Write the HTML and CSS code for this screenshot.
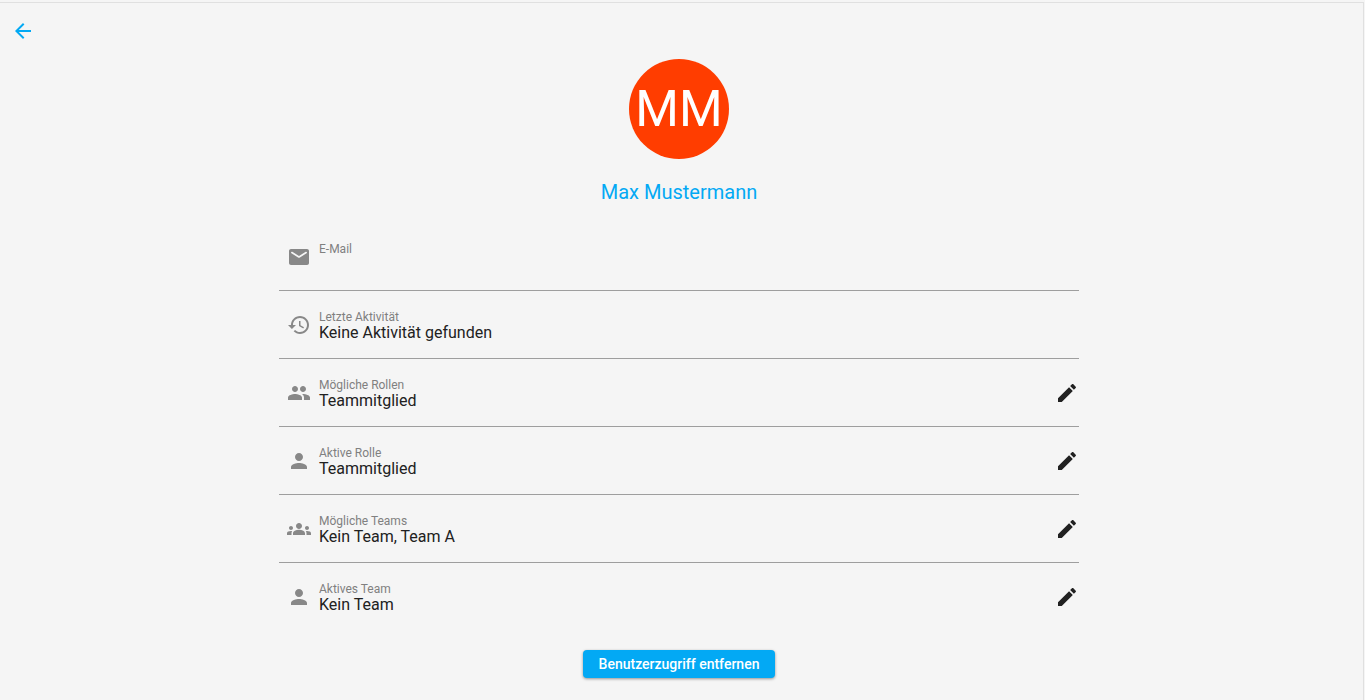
FILE: index.html
```html
<!DOCTYPE html>
<html lang="de">
<head>
<meta charset="utf-8">
<meta name="viewport" content="width=device-width, initial-scale=1">
<title>Max Mustermann</title>
<link rel="stylesheet" href="styles.css">
</head>
<body>
<svg class="sprite" aria-hidden="true">
  <symbol id="back" viewBox="0 0 24 24"><path d="M20 11H7.83l5.59-5.59L12 4l-8 8 8 8 1.41-1.41L7.83 13H20v-2z"/></symbol>
  <symbol id="mail" viewBox="0 0 24 24"><path d="M20 4H4c-1.100 0-2 .9-2 2v12c0 1.100.9 2 2 2h16c1.100 0 2-.9 2-2V6c0-1.100-.9-2-2-2zm-.4 4.250l-7.070 4.420c-.32.2-.74.2-1.060 0L4.400 8.250c-.25-.16-.4-.43-.4-.72 0-.67.73-1.070 1.300-.72L12 11l6.700-4.190c.57-.35 1.300.05 1.300.72 0 .29-.15.56-.4.72z"/></symbol>
  <symbol id="history" viewBox="0 0 24 24"><path d="M13 3c-4.970 0-9 4.030-9 9H1l3.890 3.890.07.14L9 12H6c0-3.870 3.130-7 7-7s7 3.130 7 7-3.130 7-7 7c-1.930 0-3.680-.79-4.940-2.060l-1.420 1.420C8.270 19.990 10.510 21 13 21c4.970 0 9-4.030 9-9s-4.030-9-9-9zm-1 5v5l4.280 2.540.72-1.210-3.500-2.080V8H12z"/></symbol>
  <symbol id="people" viewBox="0 0 24 24"><path d="M16 11c1.660 0 2.990-1.340 2.990-3S17.660 5 16 5s-3 1.340-3 3 1.340 3 3 3zm-8 0c1.660 0 2.990-1.340 2.990-3S9.660 5 8 5 5 6.340 5 8s1.340 3 3 3zm0 2c-2.330 0-7 1.170-7 3.500V19h14v-2.500c0-2.330-4.670-3.500-7-3.500zm8 0c-.29 0-.62.02-.97.05 1.160.84 1.970 1.970 1.970 3.450V19h6v-2.500c0-2.330-4.670-3.500-7-3.500z"/></symbol>
  <symbol id="person" viewBox="0 0 24 24"><path d="M12 12c2.210 0 4-1.790 4-4s-1.790-4-4-4-4 1.790-4 4 1.790 4 4 4zm0 2c-2.670 0-8 1.340-8 4v2h16v-2c0-2.660-5.330-4-8-4z"/></symbol>
  <symbol id="groups" viewBox="0 0 24 24"><path d="M12 12.750c1.630 0 3.070.39 4.240.9 1.080.48 1.760 1.560 1.760 2.730V18H6v-1.610c0-1.180.68-2.260 1.760-2.730 1.170-.52 2.610-.91 4.240-.91zM4 13c1.100 0 2-.9 2-2s-.9-2-2-2-2 .9-2 2 .9 2 2 2zm1.130 1.100c-.37-.06-.74-.1-1.130-.1-.99 0-1.930.21-2.780.58C.48 14.900 0 15.620 0 16.430V18h4.500v-1.610c0-.83.23-1.610.63-2.290zM20 13c1.100 0 2-.9 2-2s-.9-2-2-2-2 .9-2 2 .9 2 2 2zm4 3.430c0-.81-.48-1.530-1.220-1.850-.85-.37-1.790-.58-2.780-.58-.39 0-.76.04-1.130.1.4.68.63 1.460.63 2.290V18H24v-1.570zM12 6c1.660 0 3 1.340 3 3s-1.340 3-3 3-3-1.340-3-3 1.340-3 3-3z"/></symbol>
  <symbol id="edit" viewBox="0 0 24 24"><path d="M3 17.250V21h3.750L17.810 9.940l-3.750-3.750L3 17.250zM20.710 7.040c.39-.39.39-1.020 0-1.410l-2.340-2.340c-.39-.39-1.020-.39-1.410 0l-1.830 1.830 3.750 3.750 1.830-1.830z"/></symbol>
</svg>
<main class="page">
  <button class="icon-button back-button" type="button" aria-label="Zurück"><svg class="icon back-icon"><use href="#back"/></svg></button>
  <section class="profile">
    <div class="avatar">MM</div>
    <h1 class="name">Max Mustermann</h1>
    <ul class="details">
      <li class="row"><svg class="icon"><use href="#mail"/></svg><div class="entry"><span class="label">E-Mail</span><span class="value"></span></div></li>
      <li class="row"><svg class="icon"><use href="#history"/></svg><div class="entry"><span class="label">Letzte Aktivität</span><span class="value">Keine Aktivität gefunden</span></div></li>
      <li class="row"><svg class="icon"><use href="#people"/></svg><div class="entry"><span class="label">Mögliche Rollen</span><span class="value">Teammitglied</span></div><button class="icon-button" type="button" aria-label="Mögliche Rollen bearbeiten"><svg class="icon"><use href="#edit"/></svg></button></li>
      <li class="row"><svg class="icon"><use href="#person"/></svg><div class="entry"><span class="label">Aktive Rolle</span><span class="value">Teammitglied</span></div><button class="icon-button" type="button" aria-label="Aktive Rolle bearbeiten"><svg class="icon"><use href="#edit"/></svg></button></li>
      <li class="row"><svg class="icon"><use href="#groups"/></svg><div class="entry"><span class="label">Mögliche Teams</span><span class="value">Kein Team, Team A</span></div><button class="icon-button" type="button" aria-label="Mögliche Teams bearbeiten"><svg class="icon"><use href="#edit"/></svg></button></li>
      <li class="row"><svg class="icon"><use href="#person"/></svg><div class="entry"><span class="label">Aktives Team</span><span class="value">Kein Team</span></div><button class="icon-button" type="button" aria-label="Aktives Team bearbeiten"><svg class="icon"><use href="#edit"/></svg></button></li>
    </ul>
    <button class="remove" type="button">Benutzerzugriff entfernen</button>
  </section>
</main>
</body>
</html>
```
FILE: styles.css
```css
* {
  box-sizing: border-box;
}

body {
  margin: 0;
  padding: 2px 1px 0 0;
  background: #f5f5f5;
  color: #212121;
  font-family: Roboto, "Liberation Sans", sans-serif;
}

.sprite {
  display: none;
}

.page {
  min-height: calc(100vh - 2px);
  padding: 16px 5px 22px 0;
  border-top: 1px solid #e0e0e0;
  border-right: 1px solid #e0e0e0;
}

.icon {
  display: block;
  flex: none;
  width: 24px;
  height: 24px;
  fill: #888;
}

.icon-button {
  padding: 0;
  border: 0;
  background: none;
  cursor: pointer;
}

.icon-button .icon {
  fill: #212121;
}

.back-button {
  display: block;
  margin-left: 11px;
}

.back-button .back-icon {
  fill: #03a9f4;
}

.profile {
  display: flex;
  flex-direction: column;
  align-items: center;
  padding-top: 16px;
}

.avatar {
  display: flex;
  align-items: center;
  justify-content: center;
  width: 100px;
  height: 100px;
  border-radius: 50%;
  background: #ff3d00;
  color: #fff;
  font-size: 50px;
  line-height: 60px;
}

.name {
  margin: 20px 0 18px;
  color: #03a9f4;
  font-size: 20px;
  font-weight: 400;
  line-height: 26px;
}

.details {
  width: 100%;
  max-width: 800px;
  margin: 0 0 20px;
  padding: 0;
  list-style: none;
}

.row {
  display: flex;
  align-items: center;
  gap: 8px;
  min-height: 68px;
  padding-left: 8px;
  border-bottom: 1px solid #9e9e9e;
}

.row:last-child {
  min-height: 67px;
  border-bottom: 0;
}

.entry {
  flex: 1;
}

.label,
.value {
  display: block;
  min-height: 16px;
  line-height: 16px;
}

.label {
  color: #808080;
  font-size: 12px;
}

.value {
  font-size: 16px;
}

.remove {
  height: 28px;
  padding: 0 16px;
  border: 0;
  border-radius: 4px;
  background: #03a9f4;
  box-shadow: 0 1px 3px rgba(0, 0, 0, 0.4);
  color: #fff;
  font: 500 14px/28px Roboto, "Liberation Sans", sans-serif;
  cursor: pointer;
}
```
